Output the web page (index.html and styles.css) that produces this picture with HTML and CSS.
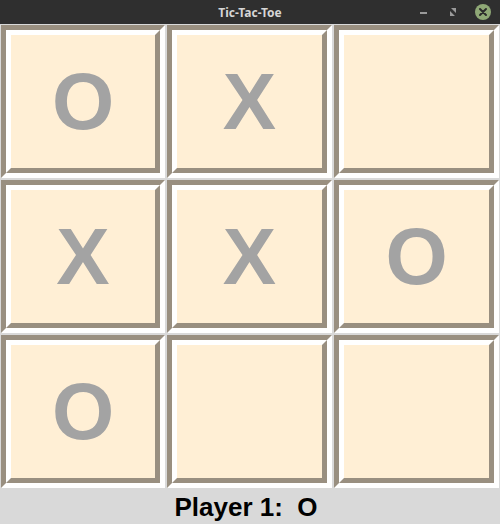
FILE: index.html
```html
<!DOCTYPE html>
<html>
<head>
<meta charset="utf-8">
<link rel="stylesheet" href="styles.css">
</head>
<body>
<div class="window">
  <div class="titlebar">
    <span class="title">Tic-Tac-Toe</span>
    <div class="controls">
      <svg class="ctl" width="16" height="16" viewBox="0 0 16 16"><rect x="4" y="8" width="7" height="2" fill="#9a9a9a"/></svg>
      <svg class="ctl" width="16" height="16" viewBox="0 0 16 16"><path d="M6 4h5v5z M10 12H5V7z" fill="#9a9a9a"/></svg>
      <svg class="ctl close" width="18" height="18" viewBox="0 0 18 18"><circle cx="9" cy="9" r="8" fill="#8fa876"/><path d="M6 6 L12 12 M12 6 L6 12" stroke="#2b2b2b" stroke-width="2" stroke-linecap="round"/></svg>
    </div>
  </div>
  <div class="board">
    <div class="cell"><div class="outer"><div class="inner">O</div></div></div>
    <div class="cell"><div class="outer"><div class="inner">X</div></div></div>
    <div class="cell"><div class="outer"><div class="inner"></div></div></div>
    <div class="cell"><div class="outer"><div class="inner">X</div></div></div>
    <div class="cell"><div class="outer"><div class="inner">X</div></div></div>
    <div class="cell"><div class="outer"><div class="inner">O</div></div></div>
    <div class="cell"><div class="outer"><div class="inner">O</div></div></div>
    <div class="cell"><div class="outer"><div class="inner"></div></div></div>
    <div class="cell"><div class="outer"><div class="inner"></div></div></div>
  </div>
  <div class="status">Player 1:  O</div>
</div>
</body>
</html>
```
FILE: styles.css
```css
html, body {
  margin: 0;
  padding: 0;
  background: #d9d9d9;
}
.window {
  width: 500px;
  height: 524px;
  display: flex;
  flex-direction: column;
  background: #d9d9d9;
}
.titlebar {
  height: 24px;
  background: #2f2f2f;
  position: relative;
  display: flex;
  align-items: center;
  justify-content: center;
}
.title {
  font-family: "Noto Sans", "DejaVu Sans", sans-serif;
  font-weight: bold;
  font-size: 12px;
  color: #d6d6d6;
}
.controls {
  position: absolute;
  right: 8px;
  top: 3px;
  display: flex;
  align-items: center;
  gap: 13px;
}
.ctl {
  display: block;
}
.board {
  display: grid;
  grid-template-columns: 166px 167px 167px;
  grid-template-rows: 155px 155px 155px;
}
.cell {
  padding: 1px;
  background: #d9d9d9;
  display: flex;
}
.outer {
  flex: 1;
  display: flex;
  border-style: solid;
  border-width: 5px;
  border-color: #998f80 #ffffff #ffffff #998f80;
}
.inner {
  flex: 1;
  display: flex;
  align-items: center;
  justify-content: center;
  border-style: solid;
  border-width: 5px;
  border-color: #ffffff #998f80 #998f80 #ffffff;
  background: #ffefd5;
  font-family: "Liberation Sans", Arial, sans-serif;
  font-weight: bold;
  font-size: 80px;
  color: #a3a3a3;
  line-height: 1;
}
.status {
  flex: 1;
  display: flex;
  align-items: center;
  justify-content: center;
  font-family: "Liberation Sans", Arial, sans-serif;
  font-weight: bold;
  font-size: 26px;
  color: #000;
  white-space: pre;
  padding-top: 2px;
  padding-right: 8px;
}
```
